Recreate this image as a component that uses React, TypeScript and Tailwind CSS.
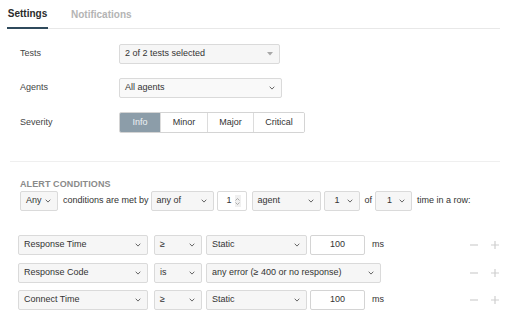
import React from 'react';

const Chevron = () => (
  <svg width="6" height="4" viewBox="0 0 6 4" className="shrink-0">
    <path d="M0.7 0.7 L3 3.1 L5.3 0.7" fill="none" stroke="#666" strokeWidth="1" />
  </svg>
);

const Caret = () => (
  <svg width="6" height="4" viewBox="0 0 6 4" className="shrink-0">
    <path d="M0 0 H6 L3 3.5 Z" fill="#a8a8a8" />
  </svg>
);

interface SelectProps {
  children: React.ReactNode;
  className?: string;
  caret?: boolean;
}

const Select: React.FC<SelectProps> = ({ children, className = '', caret }) => (
  <div
    className={`flex h-[20px] shrink-0 items-center justify-between rounded-[2px] border border-[#dadada] bg-[#f6f6f6] pl-[5px] pr-[6px] text-[9px] text-[#333] ${className}`}
  >
    <span className="whitespace-nowrap">{children}</span>
    {caret ? <Caret /> : <Chevron />}
  </div>
);

const SmallSelect: React.FC<{ className?: string }> = ({ className = '' }) => (
  <div
    className={`flex h-[20px] shrink-0 items-center justify-end gap-[7px] rounded-[2px] border border-[#dadada] bg-[#f6f6f6] pr-[6px] text-[9px] text-[#333] ${className}`}
  >
    <span>1</span>
    <Chevron />
  </div>
);

const NumberInput: React.FC<{ value: string; className?: string }> = ({ value, className = '' }) => (
  <div
    className={`flex h-[20px] shrink-0 items-center justify-center rounded-[2px] border border-[#d4d4d4] bg-white text-[9px] text-[#333] ${className}`}
  >
    {value}
  </div>
);

const PlusMinus = () => (
  <div className="ml-auto mr-[10px] flex items-center gap-[13px]">
    <svg width="8" height="8" viewBox="0 0 8 8">
      <path d="M0 4 H8" stroke="#cfcfcf" strokeWidth="1.2" />
    </svg>
    <svg width="8" height="8" viewBox="0 0 8 8">
      <path d="M0 4 H8 M4 0 V8" stroke="#cfcfcf" strokeWidth="1.2" />
    </svg>
  </div>
);

const severities = ['Info', 'Minor', 'Major', 'Critical'];
const sevWidths = ['w-[40px]', 'w-[47px]', 'w-[46px]', 'w-[51px]'];

const App: React.FC = () => {
  return (
    <div className="h-[318px] w-[509px] overflow-hidden bg-white font-['Liberation_Sans',Arial,sans-serif] text-[#333]">
      {/* Tabs */}
      <div className="ml-[7px] flex h-[29px] w-[493px] items-stretch border-b border-[#e8e8e8]">
        <div className="-mb-px flex w-[41px] items-center justify-center border-b-2 border-[#2f4a5c] text-[10px] font-bold text-[#2b2b2b]">
          Settings
        </div>
        <div className="ml-[23px] flex items-center text-[10px] font-bold text-[#b4b4b4]">Notifications</div>
      </div>

      {/* Settings form */}
      <div className="mt-[15px] flex flex-col gap-[14px] pl-[20px]">
        <div className="flex items-center">
          <span className="w-[99px] text-[9px] text-[#444]">Tests</span>
          <Select caret className="w-[161px]">2 of 2 tests selected</Select>
        </div>
        <div className="flex items-center">
          <span className="w-[99px] text-[9px] text-[#444]">Agents</span>
          <Select className="w-[163px] bg-[#f9f9f9]">All agents</Select>
        </div>
        <div className="flex items-center">
          <span className="w-[99px] text-[9px] text-[#444]">Severity</span>
          <div className="flex h-[21px] overflow-hidden rounded-[2px] border border-[#d4d4d4]">
            {severities.map((s, i) => (
              <div
                key={s}
                className={`flex items-center justify-center text-[9px] ${sevWidths[i]} ${
                  i > 0 ? 'border-l border-[#dcdcdc]' : ''
                } ${i === 0 ? 'bg-[#8c9da9] text-[#eef2f5]' : 'bg-white text-[#333]'}`}
              >
                {s}
              </div>
            ))}
          </div>
        </div>
      </div>

      <div className="ml-[10px] mt-[28px] h-px w-[490px] bg-[#efefef]" />

      {/* Alert conditions */}
      <div className="mt-[17px] pl-[20px] text-[9px] font-bold leading-[10px] tracking-[0.1px] text-[#8a8a8a]">
        ALERT CONDITIONS
      </div>
      <div className="mt-[2px] flex items-center text-[9px] text-[#333]">
        <Select className="ml-[20px] w-[38px]">Any</Select>
        <span className="ml-[5px] whitespace-nowrap">conditions are met by</span>
        <Select className="ml-[2px] w-[63px]">any of</Select>
        <div className="ml-[3px] flex h-[20px] w-[30px] items-center justify-end gap-[3px] rounded-[2px] border border-[#dadada] bg-white pr-[5px]">
          <span>1</span>
          <div className="flex h-[12px] w-[6px] flex-col items-center justify-center gap-[1px] bg-[#f0f0f0]">
            <svg width="5" height="3" viewBox="0 0 5 3">
              <path d="M0.5 2.5 L2.5 0.5 L4.5 2.5" fill="none" stroke="#999" strokeWidth="0.8" />
            </svg>
            <svg width="5" height="3" viewBox="0 0 5 3">
              <path d="M0.5 0.5 L2.5 2.5 L4.5 0.5" fill="none" stroke="#999" strokeWidth="0.8" />
            </svg>
          </div>
        </div>
        <Select className="ml-[5px] w-[69px]">agent</Select>
        <SmallSelect className="ml-[3px] w-[36px]" />
        <span className="ml-[5px]">of</span>
        <SmallSelect className="ml-[3px] w-[37px]" />
        <span className="ml-[5px] whitespace-nowrap">time in a row:</span>
      </div>

      {/* Condition rows */}
      <div className="mt-[24px] flex flex-col gap-[7.5px] text-[9px] text-[#333]">
        <div className="flex items-center">
          <Select className="ml-[18px] w-[130px]">Response Time</Select>
          <Select className="ml-[6px] w-[48px]">≥</Select>
          <Select className="ml-[4px] w-[101px]">Static</Select>
          <NumberInput value="100" className="ml-[3px] w-[55px]" />
          <span className="ml-[7px]">ms</span>
          <PlusMinus />
        </div>
        <div className="flex items-center">
          <Select className="ml-[18px] w-[130px]">Response Code</Select>
          <Select className="ml-[6px] w-[48px]">is</Select>
          <Select className="ml-[4px] w-[175px]">any error (≥ 400 or no response)</Select>
          <PlusMinus />
        </div>
        <div className="flex items-center">
          <Select className="ml-[18px] w-[130px]">Connect Time</Select>
          <Select className="ml-[6px] w-[48px]">≥</Select>
          <Select className="ml-[4px] w-[101px]">Static</Select>
          <NumberInput value="100" className="ml-[3px] w-[55px]" />
          <span className="ml-[7px]">ms</span>
          <PlusMinus />
        </div>
      </div>
    </div>
  );
};

export default App;
